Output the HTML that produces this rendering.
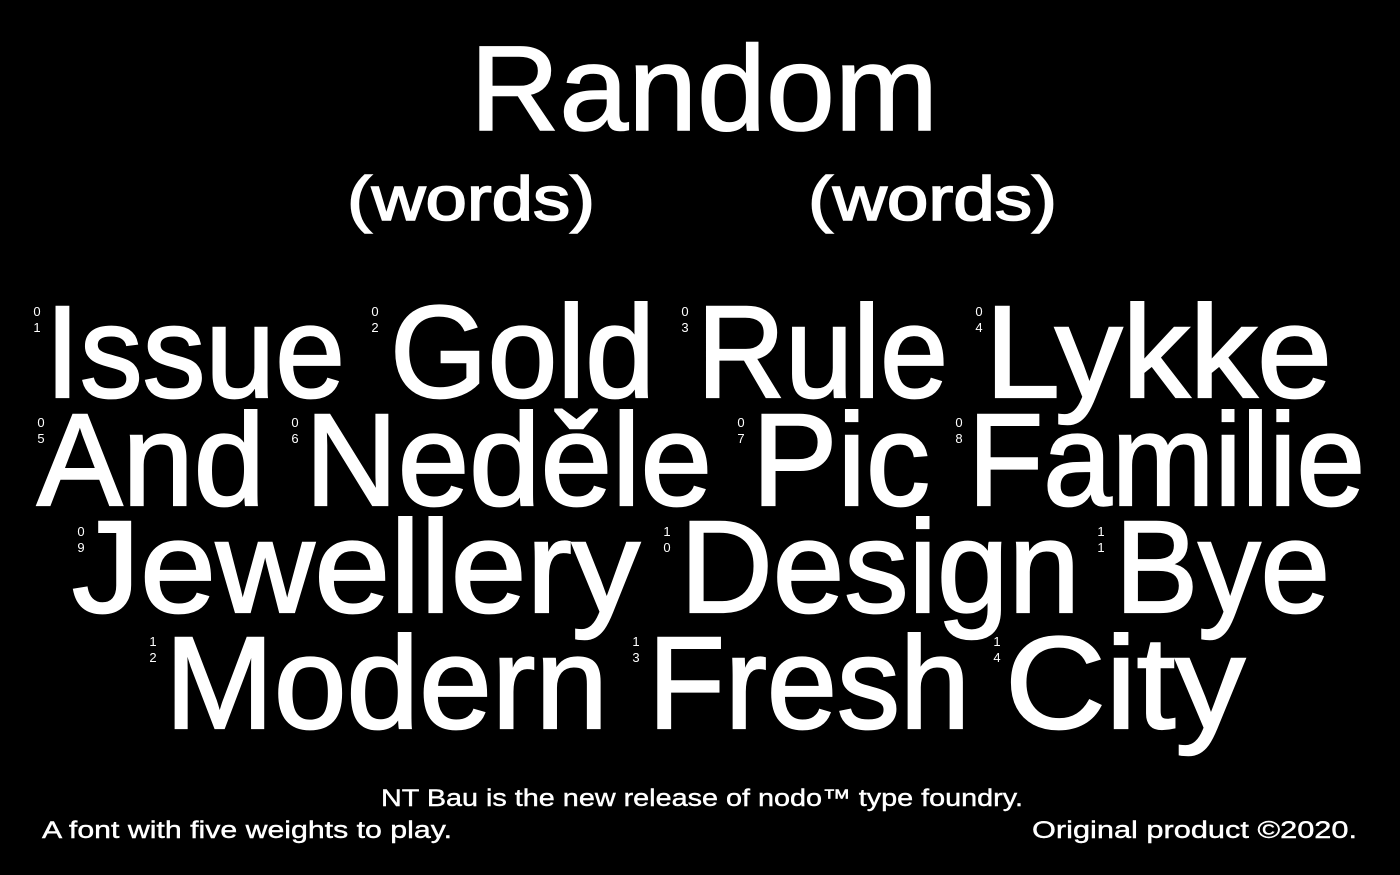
<!DOCTYPE html>
<html><head><meta charset="utf-8"><style>
html,body{margin:0;padding:0;background:#000;}
svg{display:block}
text{font-family:"Liberation Sans",sans-serif;fill:#fff}
.b{font-size:131px;stroke:#fff;stroke-width:2.2px}
.t{stroke:#fff;stroke-width:1.6px}
.n{font-size:13px}
.s{font-size:24px;stroke:#fff;stroke-width:0.4px}
</style></head><body>
<svg width="1400" height="875" viewBox="0 0 1400 875">
<rect width="1400" height="875" fill="#000"/>
<text class="t" x="470" y="130" font-size="121" textLength="468" lengthAdjust="spacingAndGlyphs">Random</text>
<text class="t" x="347" y="220" font-size="62" textLength="248" lengthAdjust="spacingAndGlyphs">(words)</text>
<text class="t" x="808" y="220" font-size="62" textLength="249" lengthAdjust="spacingAndGlyphs">(words)</text>

<text class="b" x="45" y="397" textLength="300" lengthAdjust="spacingAndGlyphs">Issue</text>
<text class="b" x="390" y="397" textLength="265" lengthAdjust="spacingAndGlyphs">Gold</text>
<text class="b" x="697" y="397" textLength="251" lengthAdjust="spacingAndGlyphs">Rule</text>
<text class="b" x="985" y="397" textLength="347" lengthAdjust="spacingAndGlyphs">Lykke</text>

<text class="b" x="37" y="505" textLength="228" lengthAdjust="spacingAndGlyphs">And</text>
<text class="b" x="305" y="505" textLength="407" lengthAdjust="spacingAndGlyphs">Neděle</text>
<text class="b" x="752" y="505" textLength="178" lengthAdjust="spacingAndGlyphs">Pic</text>
<text class="b" x="968" y="505" textLength="397" lengthAdjust="spacingAndGlyphs">Familie</text>

<text class="b" x="72" y="612" textLength="568" lengthAdjust="spacingAndGlyphs">Jewellery</text>
<text class="b" x="680" y="612" textLength="400" lengthAdjust="spacingAndGlyphs">Design</text>
<text class="b" x="1115" y="612" textLength="215" lengthAdjust="spacingAndGlyphs">Bye</text>

<text class="b" x="165" y="728" textLength="443" lengthAdjust="spacingAndGlyphs">Modern</text>
<text class="b" x="648" y="728" textLength="322" lengthAdjust="spacingAndGlyphs">Fresh</text>
<text class="b" x="1005" y="728" textLength="240" lengthAdjust="spacingAndGlyphs">City</text>

<g text-anchor="middle">
<text class="n" x="37" y="316">0</text><text class="n" x="37" y="332">1</text>
<text class="n" x="375" y="316">0</text><text class="n" x="375" y="332">2</text>
<text class="n" x="685" y="316">0</text><text class="n" x="685" y="332">3</text>
<text class="n" x="979" y="316">0</text><text class="n" x="979" y="332">4</text>
<text class="n" x="41" y="427">0</text><text class="n" x="41" y="443">5</text>
<text class="n" x="295" y="427">0</text><text class="n" x="295" y="443">6</text>
<text class="n" x="741" y="427">0</text><text class="n" x="741" y="443">7</text>
<text class="n" x="959" y="427">0</text><text class="n" x="959" y="443">8</text>
<text class="n" x="81" y="536">0</text><text class="n" x="81" y="552">9</text>
<text class="n" x="667" y="536">1</text><text class="n" x="667" y="552">0</text>
<text class="n" x="1101" y="536">1</text><text class="n" x="1101" y="552">1</text>
<text class="n" x="153" y="646">1</text><text class="n" x="153" y="662">2</text>
<text class="n" x="636" y="646">1</text><text class="n" x="636" y="662">3</text>
<text class="n" x="997" y="646">1</text><text class="n" x="997" y="662">4</text>
</g>

<text class="s" x="381" y="806" textLength="642" lengthAdjust="spacingAndGlyphs">NT Bau is the new release of nodo™ type foundry.</text>
<text class="s" x="42" y="838" textLength="410" lengthAdjust="spacingAndGlyphs">A font with five weights to play.</text>
<text class="s" x="1032" y="838" textLength="325" lengthAdjust="spacingAndGlyphs">Original product ©2020.</text>
</svg>
</body></html>
